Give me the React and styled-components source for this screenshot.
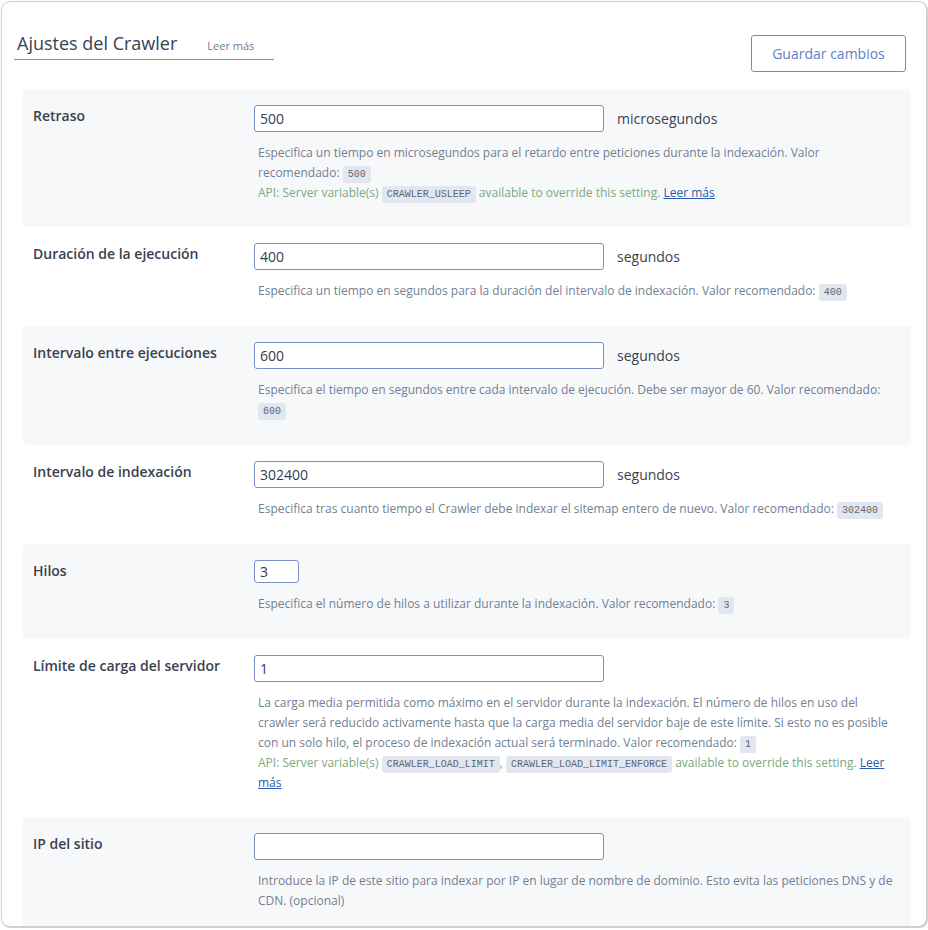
import React from "react";
import styled, { createGlobalStyle } from "styled-components";

const GlobalStyle = createGlobalStyle`
  html, body {
    margin: 0;
    padding: 0;
    background: #fff;
    font-family: "Open Sans", "Noto Sans", "Liberation Sans", sans-serif;
  }
`;

const settings = [
  {
    label: "Retraso",
    value: "500",
    unit: "microsegundos",
    text: "Especifica un tiempo en microsegundos para el retardo entre peticiones durante la indexación. Valor recomendado:",
    rec: "500",
    api: ["CRAWLER_USLEEP"],
  },
  {
    label: "Duración de la ejecución",
    value: "400",
    unit: "segundos",
    text: "Especifica un tiempo en segundos para la duración del intervalo de indexación. Valor recomendado:",
    rec: "400",
  },
  {
    label: "Intervalo entre ejecuciones",
    value: "600",
    unit: "segundos",
    text: "Especifica el tiempo en segundos entre cada intervalo de ejecución. Debe ser mayor de 60. Valor recomendado:",
    rec: "600",
  },
  {
    label: "Intervalo de indexación",
    value: "302400",
    unit: "segundos",
    text: "Especifica tras cuanto tiempo el Crawler debe indexar el sitemap entero de nuevo. Valor recomendado:",
    rec: "302400",
  },
  {
    label: "Hilos",
    value: "3",
    small: true,
    text: "Especifica el número de hilos a utilizar durante la indexación. Valor recomendado:",
    rec: "3",
  },
  {
    label: "Límite de carga del servidor",
    value: "1",
    text: "La carga media permitida como máximo en el servidor durante la indexación. El número de hilos en uso del crawler será reducido activamente hasta que la carga media del servidor baje de este límite. Si esto no es posible con un solo hilo, el proceso de indexación actual será terminado. Valor recomendado:",
    rec: "1",
    api: ["CRAWLER_LOAD_LIMIT", "CRAWLER_LOAD_LIMIT_ENFORCE"],
  },
  {
    label: "IP del sitio",
    value: "",
    text: "Introduce la IP de este sitio para indexar por IP en lugar de nombre de dominio. Esto evita las peticiones DNS y de CDN. (opcional)",
  },
];

function App() {
  return (
    <>
      <GlobalStyle />
      <Card>
        <Header>
          <TitleBox>
            <Title>Ajustes del Crawler</Title>
            <TitleLink>Leer más</TitleLink>
          </TitleBox>
          <SaveButton>Guardar cambios</SaveButton>
        </Header>

        <Rows>
          {settings.map((s, index) => (
            <Row key={s.label} $striped={index % 2 === 0}>
              <Label>{s.label}</Label>
              <Field $extra={!s.api}>
                <InputLine>
                  <Input defaultValue={s.value} $small={s.small} />
                  {s.unit && <Unit>{s.unit}</Unit>}
                </InputLine>
                <Description>
                  {s.text}
                  {s.rec && (
                    <>
                      {" "}
                      <Code>{s.rec}</Code>
                    </>
                  )}
                </Description>
                {s.api && (
                  <ApiLine>
                    API: Server variable(s){" "}
                    {s.api.map((v, i) => (
                      <React.Fragment key={v}>
                        {i > 0 && ", "}
                        <Code>{v}</Code>
                      </React.Fragment>
                    ))}{" "}
                    available to override this setting. <DocLink>Leer más</DocLink>
                  </ApiLine>
                )}
              </Field>
            </Row>
          ))}
        </Rows>
      </Card>
    </>
  );
}

const Card = styled.div`
  margin: 1px;
  height: 924px;
  border: 1px solid #cfd1d4;
  border-radius: 9px;
  box-shadow: 1px 1px 2px rgba(0, 0, 0, 0.25);
  overflow: hidden;
  background: #fff;
`;

const Header = styled.div`
  display: flex;
  justify-content: space-between;
  align-items: flex-start;
  height: 87px;
  box-sizing: border-box;
  padding: 29px 20px 0 12px;
`;

const TitleBox = styled.div`
  display: flex;
  align-items: baseline;
  gap: 30px;
  width: 260px;
  box-sizing: border-box;
  padding: 0 0 3px 3px;
  border-bottom: 1px solid #6f8fd0;
`;

const Title = styled.h3`
  margin: 0;
  font-size: 18px;
  line-height: 25px;
  font-weight: 500;
  color: #384256;
`;

const TitleLink = styled.span`
  font-size: 11px;
  color: #6d7b8f;
`;

const SaveButton = styled.button`
  margin-top: 4px;
  width: 155px;
  height: 37px;
  background: #fff;
  border: 1px solid #6d8ccf;
  border-radius: 3px;
  color: #5f7fc7;
  font-family: inherit;
  font-size: 14px;
`;

const Rows = styled.div`
  padding: 0 15px 0 21px;
`;

const Row = styled.div`
  display: grid;
  grid-template-columns: 220px 1fr;

  > * {
    background: ${(p) => (p.$striped ? "#f7f8fa" : "#fff")};
  }
`;

const Label = styled.div`
  padding: 17px 10px;
  border-radius: 3px 0 0 3px;
  font-size: 14px;
  line-height: 20px;
  font-weight: 600;
  color: #39414f;
`;

const Field = styled.div`
  padding: 16px 12px ${(p) => (p.$extra ? "25px" : "24px")} 11px;
  border-radius: 0 3px 3px 0;
`;

const InputLine = styled.div`
  display: flex;
  align-items: center;
  gap: 13px;
`;

const Input = styled.input`
  box-sizing: border-box;
  width: ${(p) => (p.$small ? "45px" : "350px")};
  height: ${(p) => (p.$small ? "23px" : "27px")};
  margin: 0;
  padding: 0 5px;
  border: 1px solid #7d8fc6;
  border-radius: 3px;
  background: #fff;
  font-family: inherit;
  font-size: 14px;
  color: #333d4d;
  outline: none;
`;

const Unit = styled.span`
  font-size: 14px;
  color: #3c4350;
`;

const Description = styled.p`
  margin: 11px 0 0 4px;
  font-size: 12px;
  line-height: 20px;
  color: #737f92;
`;

const ApiLine = styled.div`
  margin-left: 4px;
  font-size: 12px;
  line-height: 20px;
  color: #7aa981;
`;

const Code = styled.code`
  padding: 3px 5px;
  border-radius: 3px;
  background: #e2e7ef;
  font-family: "Liberation Mono", "DejaVu Sans Mono", monospace;
  font-size: 10px;
  line-height: 1;
  color: #5f6672;
`;

const DocLink = styled.a`
  color: #2a5cb0;
  text-decoration: underline;
  cursor: pointer;
`;

export default App;
